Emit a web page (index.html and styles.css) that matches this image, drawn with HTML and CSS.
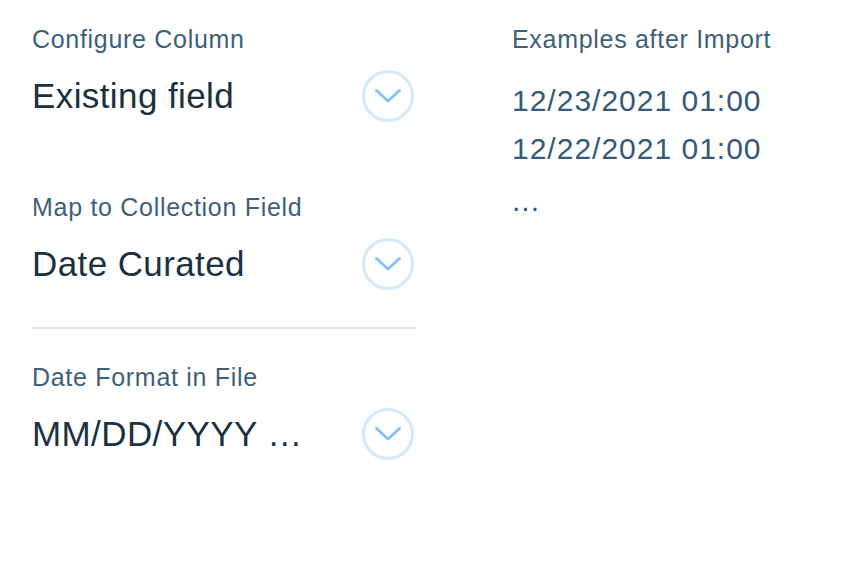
FILE: index.html
```html
<!DOCTYPE html>
<html lang="en">
<head>
<meta charset="UTF-8">
<title>Configure Column</title>
<link rel="stylesheet" href="styles.css">
</head>
<body>

<div class="panel">
  <!-- left: settings -->
  <div class="settings">
    <div class="field">
      <div class="label">Configure Column</div>
      <div class="select">
        <span class="value">Existing field</span>
        <span class="arrow">
          <svg width="52" height="52" viewBox="0 0 52 52"><circle cx="26" cy="26" r="24.5" fill="none" stroke="#d4eafc" stroke-width="3"/><path d="M14.5 20.5 L26 31 L37.5 20.5" fill="none" stroke="#84c0f4" stroke-width="3" stroke-linecap="round" stroke-linejoin="round"/></svg>
        </span>
      </div>
    </div>
    <div class="field">
      <div class="label">Map to Collection Field</div>
      <div class="select">
        <span class="value">Date Curated</span>
        <span class="arrow">
          <svg width="52" height="52" viewBox="0 0 52 52"><circle cx="26" cy="26" r="24.5" fill="none" stroke="#d4eafc" stroke-width="3"/><path d="M14.5 20.5 L26 31 L37.5 20.5" fill="none" stroke="#84c0f4" stroke-width="3" stroke-linecap="round" stroke-linejoin="round"/></svg>
        </span>
      </div>
    </div>
    <hr class="divider">
    <div class="field">
      <div class="label">Date Format in File</div>
      <div class="select">
        <span class="value">MM/DD/YYYY …</span>
        <span class="arrow">
          <svg width="52" height="52" viewBox="0 0 52 52"><circle cx="26" cy="26" r="24.5" fill="none" stroke="#d4eafc" stroke-width="3"/><path d="M14.5 20.5 L26 31 L37.5 20.5" fill="none" stroke="#84c0f4" stroke-width="3" stroke-linecap="round" stroke-linejoin="round"/></svg>
        </span>
      </div>
    </div>
  </div>

  <!-- right: examples -->
  <div class="examples">
    <div class="label">Examples after Import</div>
    <ul class="samples">
      <li>12/23/2021 01:00</li>
      <li>12/22/2021 01:00</li>
      <li class="more">...</li>
    </ul>
  </div>
</div>

</body>
</html>
```

FILE: styles.css
```css
body {
  margin: 0;
  background: #fff;
  font-family: "Liberation Sans", Arial, sans-serif;
}
.panel {
  display: flex;
  gap: 97px;
  padding: 24px 32px;
}
.settings {
  width: 383px;
  display: flex;
  flex-direction: column;
}
.field + .field {
  margin-top: 66px;
}
.label {
  font-size: 25px;
  letter-spacing: 0.7px;
  color: #3d5f7a;
  line-height: 30px;
}
.select {
  display: flex;
  align-items: center;
  justify-content: space-between;
  height: 60px;
  margin-top: 12px;
}
.value {
  font-size: 35px;
  letter-spacing: 0.4px;
  color: #1b3142;
}
.arrow {
  display: flex;
  margin-right: 1px;
}
.divider {
  width: 100%;
  border: none;
  border-top: 2px solid #dfe6ec;
  margin: 33px 0 33px;
}
.samples {
  list-style: none;
  margin: 23px 0 0;
  padding: 0;
}
.samples li {
  font-size: 30px;
  letter-spacing: 1px;
  line-height: 48px;
  color: #335a78;
}
.samples .more {
  line-height: 56px;
}
```
